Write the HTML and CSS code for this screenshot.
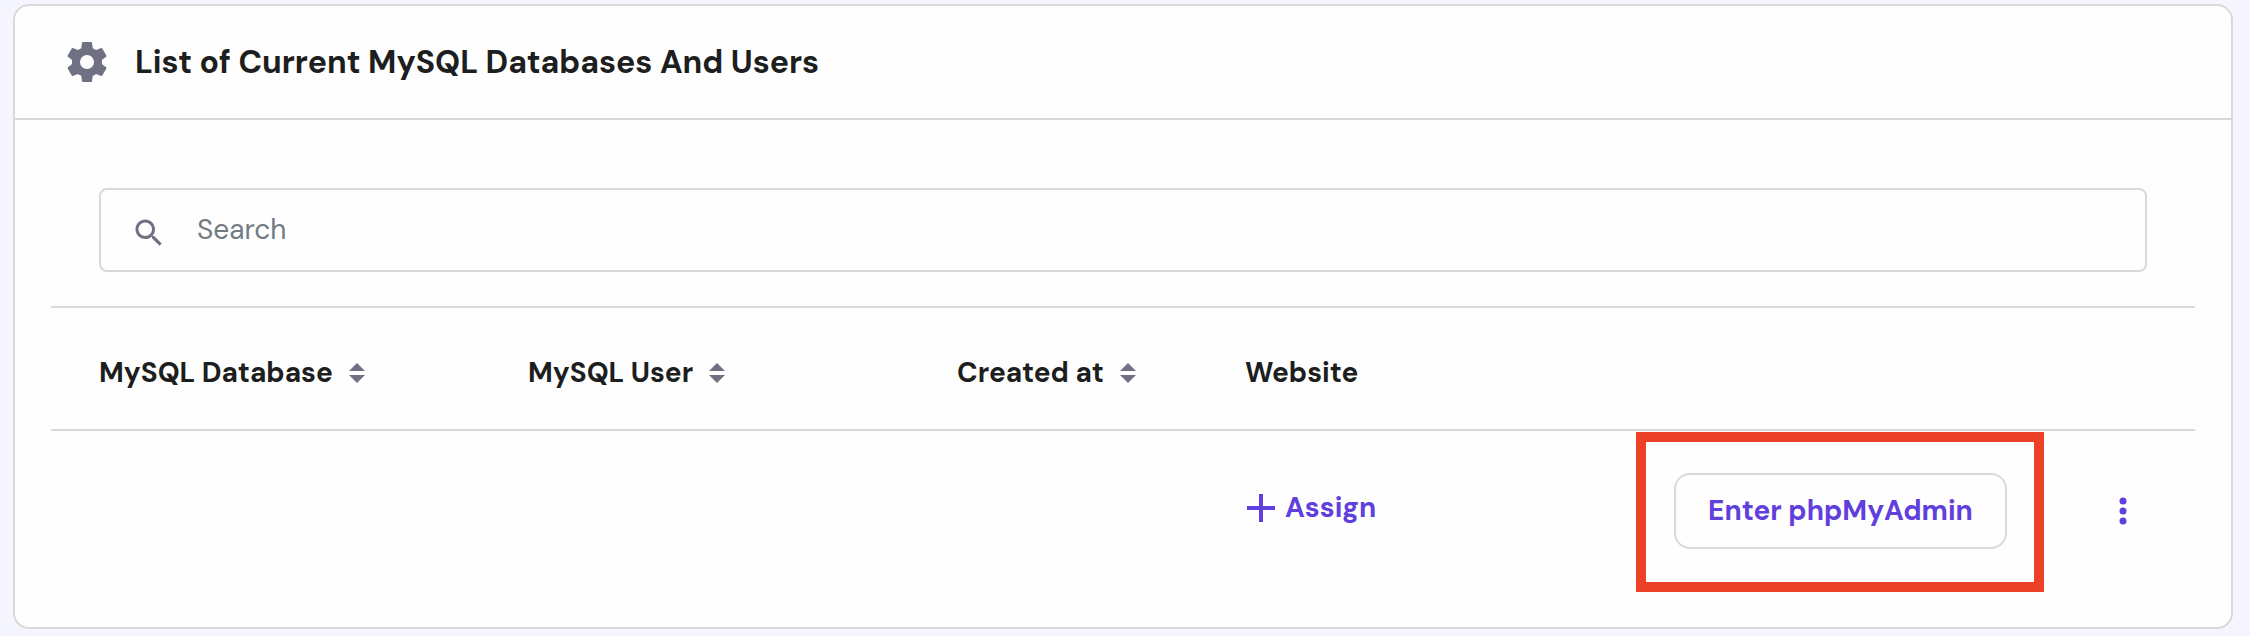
FILE: index.html
```
<!DOCTYPE html>
<html lang="en">
<head>
<meta charset="utf-8">
<title>MySQL Databases</title>
<link rel="stylesheet" href="styles.css">
</head>
<body>
<main class="card">
  <header class="card-header">
    <svg class="gear" viewBox="0 0 24 24" aria-hidden="true"><path d="M12 15.5A3.5 3.5 0 0 1 8.5 12 3.5 3.5 0 0 1 12 8.5a3.5 3.5 0 0 1 3.5 3.5 3.5 3.5 0 0 1-3.5 3.5m7.43-2.53c.04-.32.07-.64.07-.97s-.03-.66-.07-1l2.11-1.63c.19-.15.24-.42.12-.64l-2-3.46c-.12-.22-.39-.31-.61-.22l-2.49 1c-.52-.39-1.06-.73-1.69-.98l-.37-2.65A.506.506 0 0 0 14 2h-4c-.25 0-.46.18-.5.42l-.37 2.65c-.63.25-1.17.59-1.69.98l-2.49-1c-.22-.09-.49 0-.61.22l-2 3.46c-.13.22-.07.49.12.64L4.57 11c-.04.34-.07.67-.07 1s.03.65.07.97l-2.11 1.66c-.19.15-.25.42-.12.64l2 3.46c.12.22.39.3.61.22l2.49-1.01c.52.4 1.06.74 1.69.99l.37 2.65c.04.24.25.42.5.42h4c.25 0 .46-.18.5-.42l.37-2.65c.63-.26 1.17-.59 1.69-.99l2.49 1.01c.22.08.49 0 .61-.22l2-3.46c.12-.22.07-.49-.12-.64z"/></svg>
    <h1 class="title">List of Current MySQL Databases And Users</h1>
  </header>
  <section class="card-body">
    <div class="search">
      <svg class="search-icon" viewBox="0 0 24 24" aria-hidden="true"><path d="M15.5 14h-.79l-.28-.27C15.41 12.59 16 11.11 16 9.5 16 5.91 13.09 3 9.5 3S3 5.91 3 9.5 5.91 16 9.5 16c1.61 0 3.09-.59 4.23-1.57l.27.28v.79l5 4.99L20.49 19l-4.99-5zm-6 0C7.01 14 5 11.99 5 9.5S7.01 5 9.5 5 14 7.01 14 9.5 11.99 14 9.5 14z"/></svg>
      <span class="placeholder">Search</span>
    </div>
    <div class="row head">
      <div class="cell">MySQL Database<svg class="sort" viewBox="0 0 16 20"><path d="M0 8 8 0l8 8zM0 12h16l-8 8z"/></svg></div>
      <div class="cell">MySQL User<svg class="sort" viewBox="0 0 16 20"><path d="M0 8 8 0l8 8zM0 12h16l-8 8z"/></svg></div>
      <div class="cell">Created at<svg class="sort" viewBox="0 0 16 20"><path d="M0 8 8 0l8 8zM0 12h16l-8 8z"/></svg></div>
      <div class="cell">Website</div>
    </div>
    <div class="row entry">
      <a class="assign"><svg class="plus" viewBox="0 0 28 28"><path d="M12 0h4v12h12v4H16v12h-4V16H0v-4h12z"/></svg>Assign</a>
      <div class="enter"><button class="button">Enter phpMyAdmin</button></div>
      <svg class="more" viewBox="0 0 8 28"><circle cx="4" cy="4" r="3.5"/><circle cx="4" cy="14" r="3.5"/><circle cx="4" cy="24" r="3.5"/></svg>
    </div>
  </section>
</main>
</body>
</html>
```
FILE: styles.css
```
* { box-sizing: border-box; }
body {
  margin: 0;
  height: 636px;
  padding: 4px 17px 7px 13px;
  background: #f4f5ff;
  color: #1d1e20;
  font: 700 28px/40px "DM Sans", Lato, sans-serif;
  overflow: hidden;
}
svg { display: block; flex: none; fill: #6f7081; }
.card {
  height: 625px;
  background: #fefefe;
  border: 2px solid #d9d9d9;
  border-radius: 16px;
}
.card-header {
  display: flex;
  align-items: center;
  gap: 24px;
  height: 114px;
  padding-left: 48px;
  border-bottom: 2px solid #d9d9d9;
}
.gear { width: 48px; height: 48px; }
.title { margin: 0; font-size: 32px; line-height: 48px; }
.card-body { padding: 68px 36px 0; }
.search {
  display: flex;
  align-items: center;
  gap: 30px;
  height: 84px;
  margin: 0 48px 34px;
  padding-left: 30px;
  border: 2px solid #d9d9d9;
  border-radius: 8px;
}
.search-icon { width: 36px; height: 36px; margin-top: 5px; }
.placeholder { color: #727b80; font-weight: 400; }
.row {
  display: grid;
  grid-template-columns: 429px 429px 288px 383px 1fr 122px;
  padding-left: 48px;
}
.head {
  height: 125px;
  padding-top: 8px;
  border-top: 2px solid #d9d9d9;
  border-bottom: 2px solid #d9d9d9;
}
.cell { display: flex; align-items: center; gap: 16px; }
.sort { width: 16px; height: 20px; margin-top: 1px; }
.entry { padding-top: 1px; }
.assign {
  grid-column: 4;
  display: flex;
  align-items: center;
  align-self: center;
  gap: 10px;
  margin-bottom: 9px;
  padding-left: 2px;
  color: #603fdd;
}
.plus { width: 28px; height: 28px; margin-top: 1px; }
.assign .plus, .more { fill: #603fdd; }
.enter {
  justify-self: start;
  width: 408px;
  height: 160px;
  margin-left: 8px;
  padding: 31px 28px;
  border: 10px solid #eb4127;
}
.button {
  display: block;
  width: 333px;
  height: 76px;
  padding: 0;
  background: #fefefe;
  border: 2px solid #d9d9d9;
  border-radius: 16px;
  color: #603fdd;
  font: inherit;
}
.more { width: 8px; height: 28px; margin: 65px 0 0 46px; }
```
